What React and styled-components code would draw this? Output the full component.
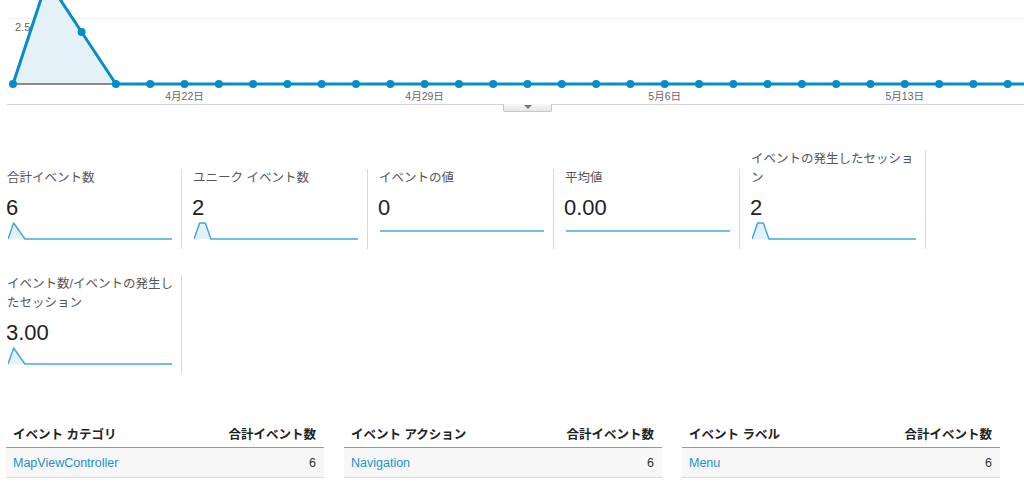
import React from "react";
import styled, { createGlobalStyle } from "styled-components";

const GlobalStyle = createGlobalStyle`
  html, body {
    margin: 0;
    padding: 0;
    background: #fff;
  }
  body {
    font-family: "Liberation Sans", Arial, "Noto Sans CJK JP", sans-serif;
    color: #222;
  }
`;

const Page = styled.div`
  width: 1024px;
  height: 485px;
  overflow: hidden;
`;

const ChartWrap = styled.div`
  position: relative;
  height: 112px;
`;

const ChartTab = styled.div`
  position: absolute;
  top: 104px;
  left: 503px;
  width: 47px;
  height: 7px;
  border: 1px solid #c8c8c8;
  border-top: none;
  border-radius: 0 0 2px 2px;
  background: linear-gradient(#f8f8f8, #e6e6e6);
  display: flex;
  justify-content: center;
  align-items: flex-start;

  &::after {
    content: "";
    margin-top: 1px;
    border-left: 4px solid transparent;
    border-right: 4px solid transparent;
    border-top: 4px solid #777;
  }
`;

const Scorecards = styled.div`
  margin-top: 38px;
  display: flex;
  flex-wrap: wrap;
  align-items: flex-end;
  row-gap: 26px;
  width: 930px;
`;

const Card = styled.div`
  box-sizing: border-box;
  width: 182px;
  margin-right: 4px;
  padding: 0 6px 8px 6px;
  border-right: 1px solid #d9d9d9;
`;

const CardLabel = styled.div`
  font-size: 12.5px;
  line-height: 19px;
  color: #555;
  padding-left: 1px;
`;

const CardValue = styled.div`
  margin-top: 6px;
  font-size: 22px;
  line-height: 28px;
  color: #222;
`;

const Spark = styled.svg`
  display: block;
  margin: 0 0 1px 2px;
`;

const Tables = styled.div`
  margin-top: 49px;
  padding-left: 6px;
  display: flex;
  gap: 20px;
`;

const Table = styled.table`
  width: 318px;
  border-collapse: collapse;
  font-size: 12.5px;
`;

const HeadCell = styled.th`
  text-align: ${(p) => (p.$right ? "right" : "left")};
  font-weight: bold;
  color: #222;
  line-height: 16px;
  padding: 4px ${(p) => (p.$right ? "8px" : "0")} 4px ${(p) => (p.$right ? "0" : "7px")};
  border-bottom: 1px solid #999;
  white-space: nowrap;
`;

const Cell = styled.td`
  text-align: ${(p) => (p.$right ? "right" : "left")};
  background: #f7f7f7;
  line-height: 16px;
  padding: 7px ${(p) => (p.$right ? "8px" : "0")} 6px ${(p) => (p.$right ? "0" : "7px")};
  border-bottom: 1px solid #dcdcdc;
  color: #333;
`;

const RowLink = styled.a`
  color: #1c8fd1;
  text-decoration: none;
`;

const series = [0, 4, 2, 0, 0, 0, 0, 0, 0, 0, 0, 0, 0, 0, 0, 0, 0, 0, 0, 0, 0, 0, 0, 0, 0, 0, 0, 0, 0, 0];
const X0 = 13;
const STEP = 34.3;
const BASE = 84;
const UNIT = 26;

const MainChart = () => {
  const pts = [...series, 0].map((v, i) => [X0 + i * STEP, BASE - v * UNIT]);
  const line = pts.map((p) => p.join(",")).join(" ");
  const area = `${X0},${BASE} ${line} ${pts[pts.length - 1][0]},${BASE}`;
  const labels = [
    { i: 5, t: "4月22日" },
    { i: 12, t: "4月29日" },
    { i: 19, t: "5月6日" },
    { i: 26, t: "5月13日" },
  ];
  return (
    <svg width="1024" height="105" style={{ display: "block" }}>
      <line x1="7" y1="18.5" x2="1024" y2="18.5" stroke="#f0f0f0" strokeWidth="1" />
      <text x="15" y="31" fontSize="11" fill="#666" fontFamily="Liberation Sans, Arial, sans-serif">2.5</text>
      <polygon points={area} fill="#e4f1f9" />
      <line x1={X0} y1={BASE} x2="1024" y2={BASE} stroke="#666" strokeWidth="1.5" />
      <polyline points={line} fill="none" stroke="#058dc7" strokeWidth="3" strokeLinejoin="round" />
      {pts.slice(0, series.length).map(([x, y], i) => (
        <circle key={i} cx={x} cy={y} r="4" fill="#058dc7" />
      ))}
      {labels.map((l) => (
        <text
          key={l.t}
          x={X0 + l.i * STEP}
          y="100"
          textAnchor="middle"
          fontSize="10.5"
          fill="#666"
          fontFamily="Liberation Sans, Arial, Noto Sans CJK JP, sans-serif"
        >
          {l.t}
        </text>
      ))}
      <line x1="7" y1="104.5" x2="1024" y2="104.5" stroke="#d4d4d4" strokeWidth="1" />
    </svg>
  );
};

const Sparkline = ({ data }) => {
  const w = 164;
  const h = 16;
  const step = w / (30 - 1);
  const max = Math.max(...data);
  const y = (v) => (max === 0 ? h / 2 + 1 : 1 + h - (v / max) * h);
  const pts = data.map((v, i) => `${(i * step).toFixed(2)},${y(v).toFixed(2)}`);
  const line = pts.join(" ");
  return (
    <Spark width={w} height={h + 2}>
      {max > 0 && <polygon points={`0,${h + 1} ${line} ${w},${h + 1}`} fill="#e3f1fa" />}
      <polyline points={line} fill="none" stroke="#45a7de" strokeWidth="1.5" strokeLinejoin="round" />
    </Spark>
  );
};

const pad = (arr) => [...arr, ...Array(30 - arr.length).fill(0)];

const cards = [
  { label: "合計イベント数", value: "6", data: pad([0, 4, 2]) },
  { label: "ユニーク イベント数", value: "2", data: pad([0, 1, 1]) },
  { label: "イベントの値", value: "0", data: pad([]) },
  { label: "平均値", value: "0.00", data: pad([]) },
  { label: "イベントの発生したセッション", value: "2", data: pad([0, 1, 1]) },
  { label: "イベント数/イベントの発生したセッション", value: "3.00", data: pad([0, 4, 2]) },
];

const tables = [
  { head: "イベント カテゴリ", name: "MapViewController" },
  { head: "イベント アクション", name: "Navigation" },
  { head: "イベント ラベル", name: "Menu" },
];

export default function App() {
  return (
    <Page>
      <GlobalStyle />
      <ChartWrap>
        <MainChart />
        <ChartTab />
      </ChartWrap>
      <Scorecards>
        {cards.map((c) => (
          <Card key={c.label}>
            <CardLabel>{c.label}</CardLabel>
            <CardValue>{c.value}</CardValue>
            <Sparkline data={c.data} />
          </Card>
        ))}
      </Scorecards>
      <Tables>
        {tables.map((t) => (
          <Table key={t.head}>
            <thead>
              <tr>
                <HeadCell>{t.head}</HeadCell>
                <HeadCell $right>合計イベント数</HeadCell>
              </tr>
            </thead>
            <tbody>
              <tr>
                <Cell>
                  <RowLink href="#">{t.name}</RowLink>
                </Cell>
                <Cell $right>6</Cell>
              </tr>
            </tbody>
          </Table>
        ))}
      </Tables>
    </Page>
  );
}
